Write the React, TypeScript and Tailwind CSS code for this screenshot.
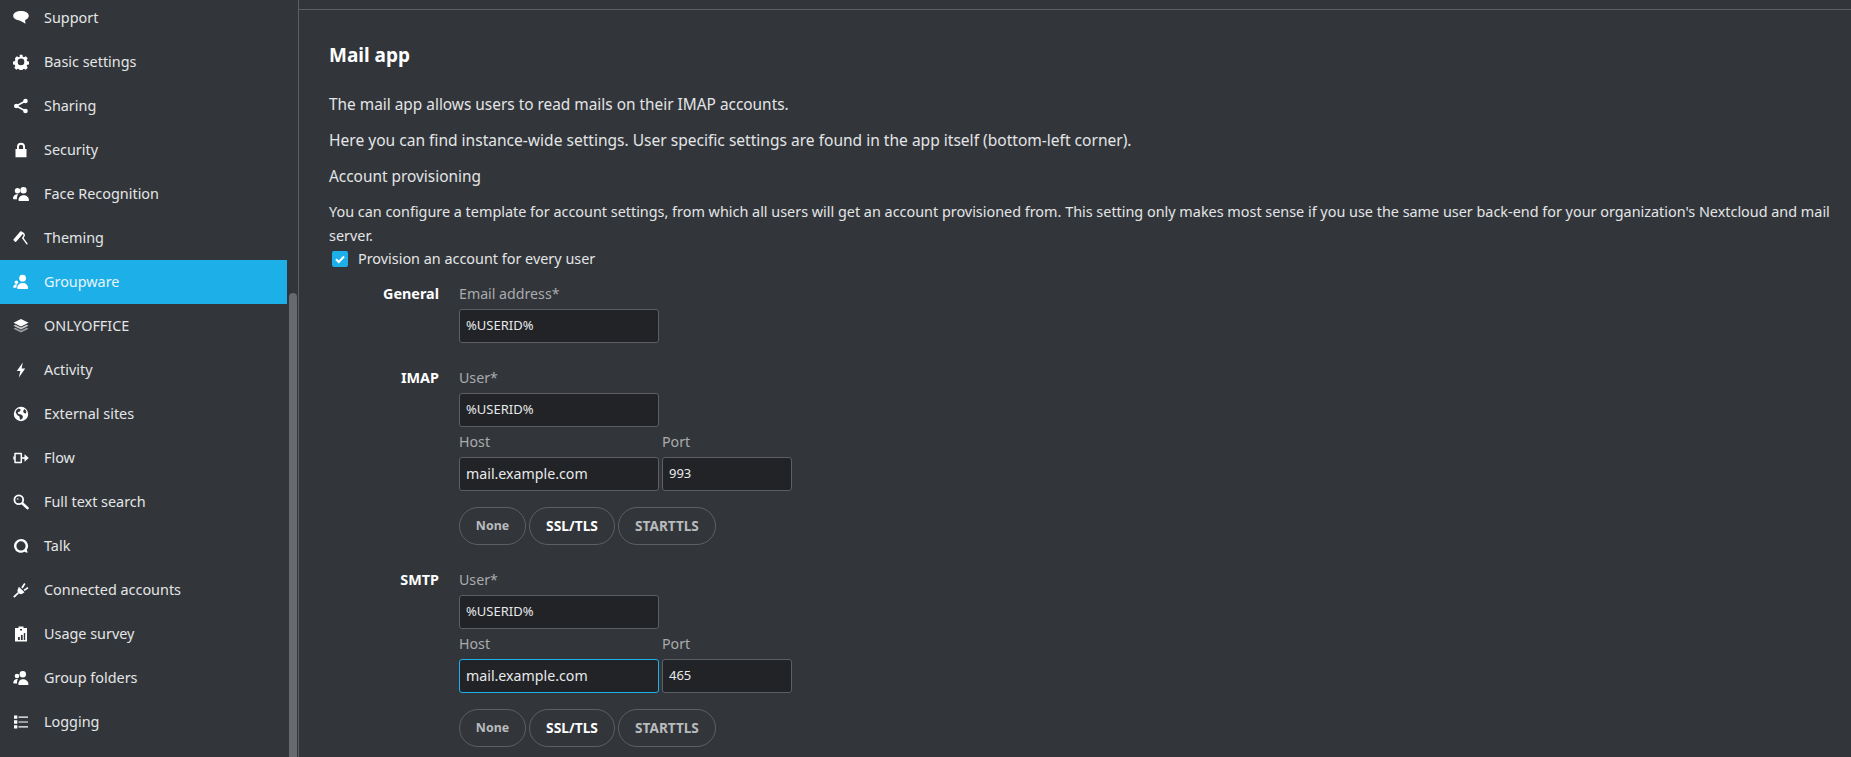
import React from 'react';

const font = "font-['Noto_Sans','Open_Sans',sans-serif]";

// Sidebar icons, all drawn on a 16x16 box
const icons: Record<string, React.ReactNode> = {
    support: <path d="M8 1C3.800 1 .2 2.800 .2 5.800c0 2.500 2.700 4.200 6.300 4.700 1.300.2 3.700 1.900 5.400 3 .4.200.7 0 .6-.4-.2-1-.4-2-.4-3.200 2.300-.8 3.700-2.200 3.700-4.100C15.800 2.800 12.200 1 8 1z" />,
    settings: <path fillRule="evenodd" d="M6.500 .8h3l.4 2 1.300.6 1.800-1.100 2.100 2.100-1.100 1.800.6 1.300 2 .4v3l-2 .4-.6 1.300 1.100 1.800-2.100 2.100-1.800-1.100-1.300.6-.4 2h-3l-.4-2-1.300-.6-1.800 1.100-2.100-2.100 1.100-1.800-.6-1.300-2-.4v-3l2-.4.6-1.300L1.600 4.400l2.100-2.100 1.800 1.100 1.300-.6zM8 4.700a3.500 3.500 0 1 0 0 7 3.500 3.500 0 0 0 0-7z" transform="translate(.4 .1) scale(.95)" />,
    share: <g><circle cx="12.500" cy="3" r="2.300" /><circle cx="3.300" cy="8" r="2.300" /><circle cx="12.500" cy="13" r="2.300" /><path d="M3.300 8l9.200-5M3.300 8l9.200 5" stroke="currentColor" strokeWidth="1.600" fill="none" /></g>,
    lock: <path fillRule="evenodd" d="M8 .8a4 4 0 0 0-4 4V7H2.500v8.200h11V7H12V4.800a4 4 0 0 0-4-4zm0 1.900a2.100 2.100 0 0 1 2.100 2.100V7H5.900V4.800A2.100 2.100 0 0 1 8 2.700z" />,
    face: <g><circle cx="10.500" cy="4.200" r="3.200" /><circle cx="4.500" cy="4.800" r="2.700" /><path d="M5.500 14.200c0-2.800 1.900-5 5-5s5.500 2 5.500 5c0 .6-.4.800-.9.800H6.200c-.4 0-.7-.3-.7-.8zM0 12.500c0-2.300 1.800-4.200 4.400-4.200.3 0 .6 0 .8.100-.8 1-1.300 2.300-1.300 3.700 0 .4 0 .7.100 1.100H.7c-.4 0-.7-.2-.7-.7z" /></g>,
    theming: <g><path d="M.6 9.300 7.300 1.500c.4-.4.900-.4 1.300-.1l1.300 1.100c.4.400.4.900.1 1.300L3.300 11.600c-.3.400-.9.400-1.300.1L.8 10.600c-.4-.3-.5-.9-.2-1.300z" /><path d="M10.400 3.300c1.100 1.200 1.100 2.200.3 3.300l-1 1.400 4.300 5.800" stroke="currentColor" strokeWidth="1.400" fill="none" strokeLinecap="round" /></g>,
    groupware: <g><circle cx="9.600" cy="4.200" r="3.400" /><path d="M4.800 15c-.3 0-.6-.3-.6-.7 0-3.100 2.100-5.200 5.400-5.200s5.400 2 5.400 5.200c0 .4-.3.700-.6.700z" /><circle cx="3.400" cy="8.300" r="1.800" /><path d="M.2 13.300c0-1.800 1.300-3 3.300-3 .3 0 .5 0 .7.100-.5.800-.8 1.800-.8 2.900v.5H.8c-.3 0-.6-.1-.6-.5z" /></g>,
    layers: <g><path d="M8 1l7.500 3.800L8 8.600.5 4.800z" /><path opacity=".75" d="M2.300 6.700 8 9.600l5.700-2.900 1.800 1L8 11.500.5 7.700z" /><path opacity=".5" d="M2.300 9.700 8 12.600l5.700-2.900 1.800 1L8 14.500.5 10.700z" /></g>,
    activity: <path d="M9.800 .4 3.800 9h3.500L5.900 15.600 12.200 6.600H8.600z" />,
    globe: <path fillRule="evenodd" d="M8 .8a7.200 7.200 0 1 0 0 14.400A7.200 7.200 0 0 0 8 .8zM5.800 2.500 7.800 3.600 6.800 5.600 4.700 6.200 5.400 8l2.600.5 1.900 1.400-.4 2.300-1.600 1.600-1-.6-.4-2.700-2.400-1.500-1.500-3C3.300 4.300 4.300 3.200 5.800 2.500zm5.400.4c1 .6 1.800 1.500 2.200 2.600l-.6 1.900-1.800-.5-.9-1.400z" />,
    flow: <g><path d="M2 3.500h6.300v9H2z" fill="none" stroke="currentColor" strokeWidth="1.500" strokeLinejoin="round" /><path d="M.3 6.500h1.500v3H.3z" /><path d="M8.300 8h5" stroke="currentColor" strokeWidth="1.600" fill="none" /><path d="M11.500 4.300 15.800 8l-4.300 3.700z" /></g>,
    search: <g><circle cx="5.800" cy="5.800" r="4.400" fill="none" stroke="currentColor" strokeWidth="1.800" /><path d="M9.500 9.500l5 4.600" stroke="currentColor" strokeWidth="2.600" strokeLinecap="round" /><circle cx="4.700" cy="5" r="1" opacity=".6" /></g>,
    talk: <path fillRule="evenodd" d="M8 1a6.900 6.900 0 1 0 3.500 12.800l2.300 1c.5.200.9-.1.800-.6l-.8-2.400A6.900 6.900 0 0 0 8 1zm0 2.300a4.600 4.600 0 1 1 0 9.200 4.600 4.600 0 0 1 0-9.200z" />,
    plug: <g><path d="M5.800 4.800 11.500 10.200l-1.800 1.300c-1.500 1-3.200.8-4.300-.4s-1.300-2.800-.3-4.300z" /><path d="M8.200 5.300 11.200 1l1.300 1-2.800 4.500zM10.500 7.700l4-2.700 1 1.300-3.800 2.800z" /><path d="M5.300 10.800 .8 15.200" stroke="currentColor" strokeWidth="1.800" fill="none" /></g>,
    survey: <path fillRule="evenodd" d="M5.500 .5h5v1.500H14v13.500H2V2h3.500zM7 3v1.400h2V3zM5 11h1.800v3H5zm2.900-2h1.800v5H7.900zm2.900-2h1.400v7h-1.400z" />,
    folders: <g><circle cx="9.800" cy="4.300" r="3.200" /><circle cx="4" cy="6" r="2.300" /><path d="M5.300 14.300c0-2.900 1.700-5 4.600-5s5.600 2 5.600 5c0 .4-.3.700-.8.700H6c-.4 0-.7-.3-.7-.7zM.3 12.700c0-2.200 1.700-3.800 3.900-3.800.3 0 .5 0 .7.100-.5.900-.9 2.100-.9 3.400 0 .4 0 .7.100 1H1c-.4 0-.7-.3-.7-.7z" /></g>,
    logging: <path d="M1 1.500h3.300v3.300H1zM1 6.300h3.300v3.400H1zM1 11.200h3.300v3.300H1zM5.500 2.500H15v1.200H5.500zM5.500 7.400H15v1.200H5.500zM5.500 12.300H15v1.200H5.500z" />,
};

const items = [
    { label: 'Support', icon: 'support' },
    { label: 'Basic settings', icon: 'settings' },
    { label: 'Sharing', icon: 'share' },
    { label: 'Security', icon: 'lock' },
    { label: 'Face Recognition', icon: 'face' },
    { label: 'Theming', icon: 'theming' },
    { label: 'Groupware', icon: 'groupware', active: true },
    { label: 'ONLYOFFICE', icon: 'layers' },
    { label: 'Activity', icon: 'activity' },
    { label: 'External sites', icon: 'globe' },
    { label: 'Flow', icon: 'flow' },
    { label: 'Full text search', icon: 'search' },
    { label: 'Talk', icon: 'talk' },
    { label: 'Connected accounts', icon: 'plug' },
    { label: 'Usage survey', icon: 'survey' },
    { label: 'Group folders', icon: 'folders' },
    { label: 'Logging', icon: 'logging' },
];

function NavItem({ label, icon, active }: { label: string; icon: string; active?: boolean }) {
    return (
        <div className={active ? "h-11 flex items-center bg-[#1cafe8] text-[#e6f4fb]" : "h-11 flex items-center text-[#e4e5e6]"}>
            <svg viewBox="0 0 16 16" fill="currentColor" className="w-4 h-4 ml-[13px] mr-[15px] shrink-0 text-white">{icons[icon]}</svg>
            <span className="text-[14.4px] leading-none">{label}</span>
        </div>
    );
}

function Field({ value, className, textSize, focused }: { value: string; className: string; textSize: string; focused?: boolean }) {
    return (
        <div className={`${className} ${textSize} h-[34px] flex items-center px-[6px] rounded-[3px] border bg-[#212326] text-[#e8e9ea] ${focused ? 'border-[#1cafe8]' : 'border-[#5c5f63]'}`}>
            {value}
        </div>
    );
}

function SecurityButtons() {
    const opts = [
        { label: 'None', cls: 'w-[67px] text-[12.4px] text-[#b9bbbd]' },
        { label: 'SSL/TLS', cls: 'w-[86px] text-[13.8px] text-white' },
        { label: 'STARTTLS', cls: 'w-[98px] text-[13.6px] text-[#b9bbbd]' },
    ];
    return (
        <div className="flex gap-[3px] mt-4">
            {opts.map(o => (
                <div key={o.label} className={`${o.cls} h-[38px] flex items-center justify-center rounded-full border border-[#5c5f63] font-bold`}>
                    {o.label}
                </div>
            ))}
        </div>
    );
}

function ServerGroup({ title, port, focused }: { title: string; port: string; focused?: boolean }) {
    return (
        <div className="flex">
            <div className="w-[110px] text-right text-[14.4px] font-bold text-white leading-[20px]">{title}</div>
            <div className="ml-[20px]">
                <div className="text-[14.2px] text-[#a9abad] leading-[20px] mb-[5px]">User*</div>
                <Field value="%USERID%" className="w-[200px]" textSize="text-[13px]" />
                <div className="flex gap-[3px] mt-[5px]">
                    <div>
                        <div className="text-[14.2px] text-[#a9abad] leading-[20px] mb-[5px]">Host</div>
                        <Field value="mail.example.com" className="w-[200px]" textSize="text-[14.2px]" focused={focused} />
                    </div>
                    <div>
                        <div className="text-[14.2px] text-[#a9abad] leading-[20px] mb-[5px]">Port</div>
                        <Field value={port} className="w-[130px]" textSize="text-[13px]" />
                    </div>
                </div>
                <SecurityButtons />
            </div>
        </div>
    );
}

export default function App() {
    return (
        <div className={`${font} h-[757px] overflow-hidden flex bg-[#32363b] text-[#e4e5e6]`}>
            {/* Sidebar */}
            <div className="w-[299px] shrink-0 h-full flex border-r border-[#5c5f63] relative">
                <div className="w-[287px] shrink-0 -mt-[4px]">
                    {items.map(item => <NavItem key={item.label} {...item} />)}
                </div>
                <div className="absolute right-[1px] top-[293px] bottom-0 w-[8px] rounded-t-full bg-[#686b6e]" />
            </div>

            {/* Main */}
            <div className="flex-1 min-w-0">
                <div className="h-[10px] border-b border-[#5c5f63]" />
                <div className="pl-[30px] pr-5">
                    <h2 className="text-[19px] font-bold text-white leading-[30px] mt-[30px]">Mail app</h2>
                    <p className="text-[15.4px] leading-[20px] mt-[25px]">The mail app allows users to read mails on their IMAP accounts.</p>
                    <p className="text-[15.55px] leading-[20px] mt-[15px]">Here you can find instance-wide settings. User specific settings are found in the app itself (bottom-left corner).</p>
                    <p className="text-[15.4px] leading-[20px] mt-[17px]">Account provisioning</p>
                    <p className="text-[14.4px] leading-[24px] mt-[13px]">You can configure a template for account settings, from which all users will get an account provisioned from. This setting only makes most sense if you use the same user back-end for your organization's Nextcloud and mail server.</p>
                    <div className="flex items-center ml-[3px] h-[20px] mt-[1px]">
                        <div className="w-4 h-4 rounded-[2px] bg-[#1cafe8] flex items-center justify-center">
                            <svg viewBox="0 0 16 16" className="w-4 h-4" fill="none" stroke="white" strokeWidth="2"><path d="M4 8.200 6.800 11 12 5.500" /></svg>
                        </div>
                        <span className="text-[14.4px] ml-[10px]">Provision an account for every user</span>
                    </div>
                    <div className="mt-[15px]">
                        <div className="flex">
                            <div className="w-[110px] text-right text-[14.4px] font-bold text-white leading-[20px]">General</div>
                            <div className="ml-[20px]">
                                <div className="text-[14.2px] text-[#a9abad] leading-[20px] mb-[5px]">Email address*</div>
                                <Field value="%USERID%" className="w-[200px]" textSize="text-[13px]" />
                            </div>
                        </div>
                        <div className="mt-[25px]"><ServerGroup title="IMAP" port="993" /></div>
                        <div className="mt-[25px]"><ServerGroup title="SMTP" port="465" focused /></div>
                    </div>
                </div>
            </div>
        </div>
    );
}
